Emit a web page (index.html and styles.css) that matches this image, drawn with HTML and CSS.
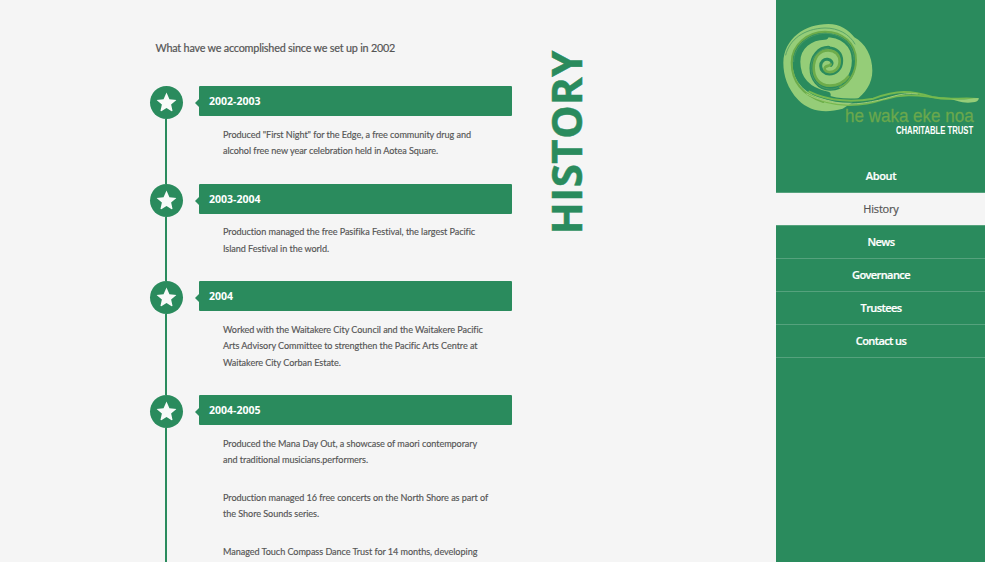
FILE: index.html
```html
<!DOCTYPE html>
<html lang="en">
<head>
<meta charset="utf-8">
<title>History - He Waka Eke Noa Charitable Trust</title>
<link rel="stylesheet" href="styles.css">
</head>
<body>
<svg class="defs" aria-hidden="true"><symbol id="star" viewBox="0 0 20 20"><path d="M10 .5 12.8 6.8 19.5 7.5 14.4 12 16 19 10 15.3 4 19 5.6 12 .5 7.5 7.2 6.8Z"/></symbol></svg>
<div class="page">
  <main class="content">
    <section class="history">
      <p class="intro">What have we accomplished since we set up in 2002</p>
      <div class="timeline">
        <article class="entry">
          <span class="badge"><svg><use href="#star"/></svg></span>
          <div class="detail"><h2>2002-2003</h2>
            <p>Produced "First Night" for the Edge, a free community drug and<br>alcohol free new year celebration held in Aotea Square.</p></div>
        </article>
        <article class="entry">
          <span class="badge"><svg><use href="#star"/></svg></span>
          <div class="detail"><h2>2003-2004</h2>
            <p>Production managed the free Pasifika Festival, the largest Pacific<br>Island Festival in the world.</p></div>
        </article>
        <article class="entry">
          <span class="badge"><svg><use href="#star"/></svg></span>
          <div class="detail"><h2>2004</h2>
            <p>Worked with the Waitakere City Council and the Waitakere Pacific<br>Arts Advisory Committee to strengthen the Pacific Arts Centre at<br>Waitakere City Corban Estate.</p></div>
        </article>
        <article class="entry">
          <span class="badge"><svg><use href="#star"/></svg></span>
          <div class="detail"><h2>2004-2005</h2>
            <p>Produced the Mana Day Out, a showcase of maori contemporary<br>and traditional musicians.performers.</p>
            <p>Production managed 16 free concerts on the North Shore as part of<br>the Shore Sounds series.</p>
            <p>Managed Touch Compass Dance Trust for 14 months, developing</p></div>
        </article>
      </div>
    </section>
    <h1>HISTORY</h1>
  </main>
  <aside class="sidebar">
    <svg class="logo" viewBox="0 0 627 420" role="img" aria-label="he waka eke noa charitable trust">
      <g transform="translate(12 30)">
        <path class="light" d="M145 12C180 12 207 30 223 52C256 70 277 108 277 152C277 190 256 220 225 242L188 266C135 281 88 274 55 240C22 205 10 165 10 128C12 55 75 12 145 12Z"/>
        <path class="gap wide" d="M140 226C90 215 49 185 49 125C49 78 90 47 134 47"/>
        <path class="gap" d="M238 241C200 244 160 240 130 228M125 45C188 42 222 76 222 122C222 170 190 206 150 206C115 206 95 175 95 145C95 108 118 84 145 84"/>
        <path class="gap fine" d="M145 84C170 84 185 100 185 122C185 147 168 162 148 162C132 162 122 150 122 138C122 125 132 116 143 118C154 120 160 128 153 136"/>
        <path class="mid" d="M130 246C70 225 35 185 35 128C35 72 85 35 135 35C190 35 228 72 228 120C228 160 206 190 180 202"/>
        <path class="mid core" d="M205 170C190 190 172 197 150 197C115 197 101 170 101 145C101 112 118 91 145 91C166 91 179 105 179 124C179 146 162 158 146 156C134 155 131 146 136 141C142 136 147 139 152 133"/>
        <path class="thin" d="M17 105C28 60 70 26 135 24C175 24 208 42 225 72M41 125C41 80 85 40 138 40C188 42 221 76 222 120M186 192C175 205 160 208 148 207C115 205 93 178 93 145C93 110 118 86 145 84"/>
      </g>
      <path class="tail" d="M100 245C161 276 236 276 292 266C365 239 405 242 468 261C520 273 553 262 603 267"/>
      <path class="tail lower" d="M91 250C175 302 268 287 325 268C400 245 446 262 503 264C540 266 563 277 601 272"/>
      <path class="light" d="M525 267C557 273 581 265 608 264C610 272 599 278 576 278C552 278 539 270 525 267Z"/>
      <path class="shine" d="M92 252C160 286 226 287 287 275C343 266 371 245 424 252"/>
      <text class="brand" x="207" y="335" textLength="386" lengthAdjust="spacingAndGlyphs">he waka eke noa</text>
      <text class="trust" transform="translate(360 373) scale(.7 1)">CHARITABLE TRUST</text>
    </svg>
    <nav>
      <a>About</a><a class="active">History</a><a>News</a><a>Governance</a><a>Trustees</a><a>Contact us</a>
    </nav>
  </aside>
</div>
</body>
</html>
```
FILE: styles.css
```css
* { box-sizing: border-box; }
body { margin: 0; background: #f5f5f5; color: #555; font-family: Lato, sans-serif; overflow: hidden; font-variant-ligatures: none; }
.defs { display: none; }
.page { display: flex; height: 562px; overflow: hidden; }
.content { flex: 1; display: flex; align-items: flex-start; padding-left: 149.5px; }
.history { width: 362.5px; }
.intro { margin: 40px 0 0 6px; font-size: 10.8px; letter-spacing: -.2px; line-height: 16px; white-space: nowrap; -webkit-text-stroke: .2px; }
.timeline { margin-top: 30px; }
.entry { display: flex; gap: 16.5px; }
.badge { width: 33px; flex: none; display: flex; flex-direction: column; align-items: center; }
.badge svg { width: 33px; height: 33px; flex: none; padding: 6px; border-radius: 50%; background: #2a8b5d; fill: #f8fbf9; }
.badge::after { content: ""; width: 2px; flex: 1; background: #2a8b5d; }
.detail { width: 313px; padding-bottom: 24px; }
.detail h2 { position: relative; margin: 0 0 10.6px; height: 30px; padding-left: 10px; border-radius: 1px; background: #2a8b5d; color: #fff; font: bold 10.5px/30px "Open Sans", sans-serif; }
h2::before { content: ""; position: absolute; left: -4px; top: 13px; border: solid transparent; border-width: 4px 4px 4px 0; border-right-color: #2a8b5d; }
.detail p { margin: 0 0 21px 24px; font-size: 9.1px; letter-spacing: -.06px; line-height: 16.5px; white-space: nowrap; -webkit-text-stroke: .15px; }
.detail p:last-child { margin-bottom: 0; }
h1 { margin: 50px 0 0 32px; width: 43px; color: #2a8b5d; font: bold 42px/43px "Open Sans", sans-serif; letter-spacing: .5px; -webkit-text-stroke: .5px; writing-mode: vertical-rl; transform: rotate(180deg); white-space: nowrap; }
.sidebar { width: 209px; background: #2a8b5d; padding-top: 10px; }
.logo { display: block; width: 209px; height: 140px; }
.light { fill: #95cd78; }
.gap, .mid, .thin, .tail, .shine { fill: none; stroke-linecap: round; }
.gap { stroke: #2a8b5d; stroke-width: 13; }
.wide { stroke-width: 24; }
.fine { stroke-width: 9; }
.mid { stroke: #6dac4b; stroke-width: 6; }
.core { stroke-width: 8; }
.thin { stroke: #4d9c64; stroke-width: 2.5; }
.tail { stroke: #75b94f; stroke-width: 6; }
.lower { stroke-width: 5; }
.shine { stroke: #a2cb7b; stroke-width: 3; }
.brand { fill: #6aa84c; font: 55px "Liberation Sans", sans-serif; stroke: #6aa84c; stroke-width: .8; }
.trust { fill: #fff; font: bold 33px "Liberation Sans", sans-serif; }
nav { padding-top: 10px; }
nav a { display: block; height: 33px; border-bottom: 1px solid #55a27d; color: #fff; text-align: center; font: 600 11px/32px "Open Sans", sans-serif; letter-spacing: -.6px; padding-left: 1px; -webkit-text-stroke: .2px; }
nav a:first-child { letter-spacing: -.3px; }
nav .active { background: #f5f5f5; color: #555; font-weight: 400; letter-spacing: -.2px; }
```
